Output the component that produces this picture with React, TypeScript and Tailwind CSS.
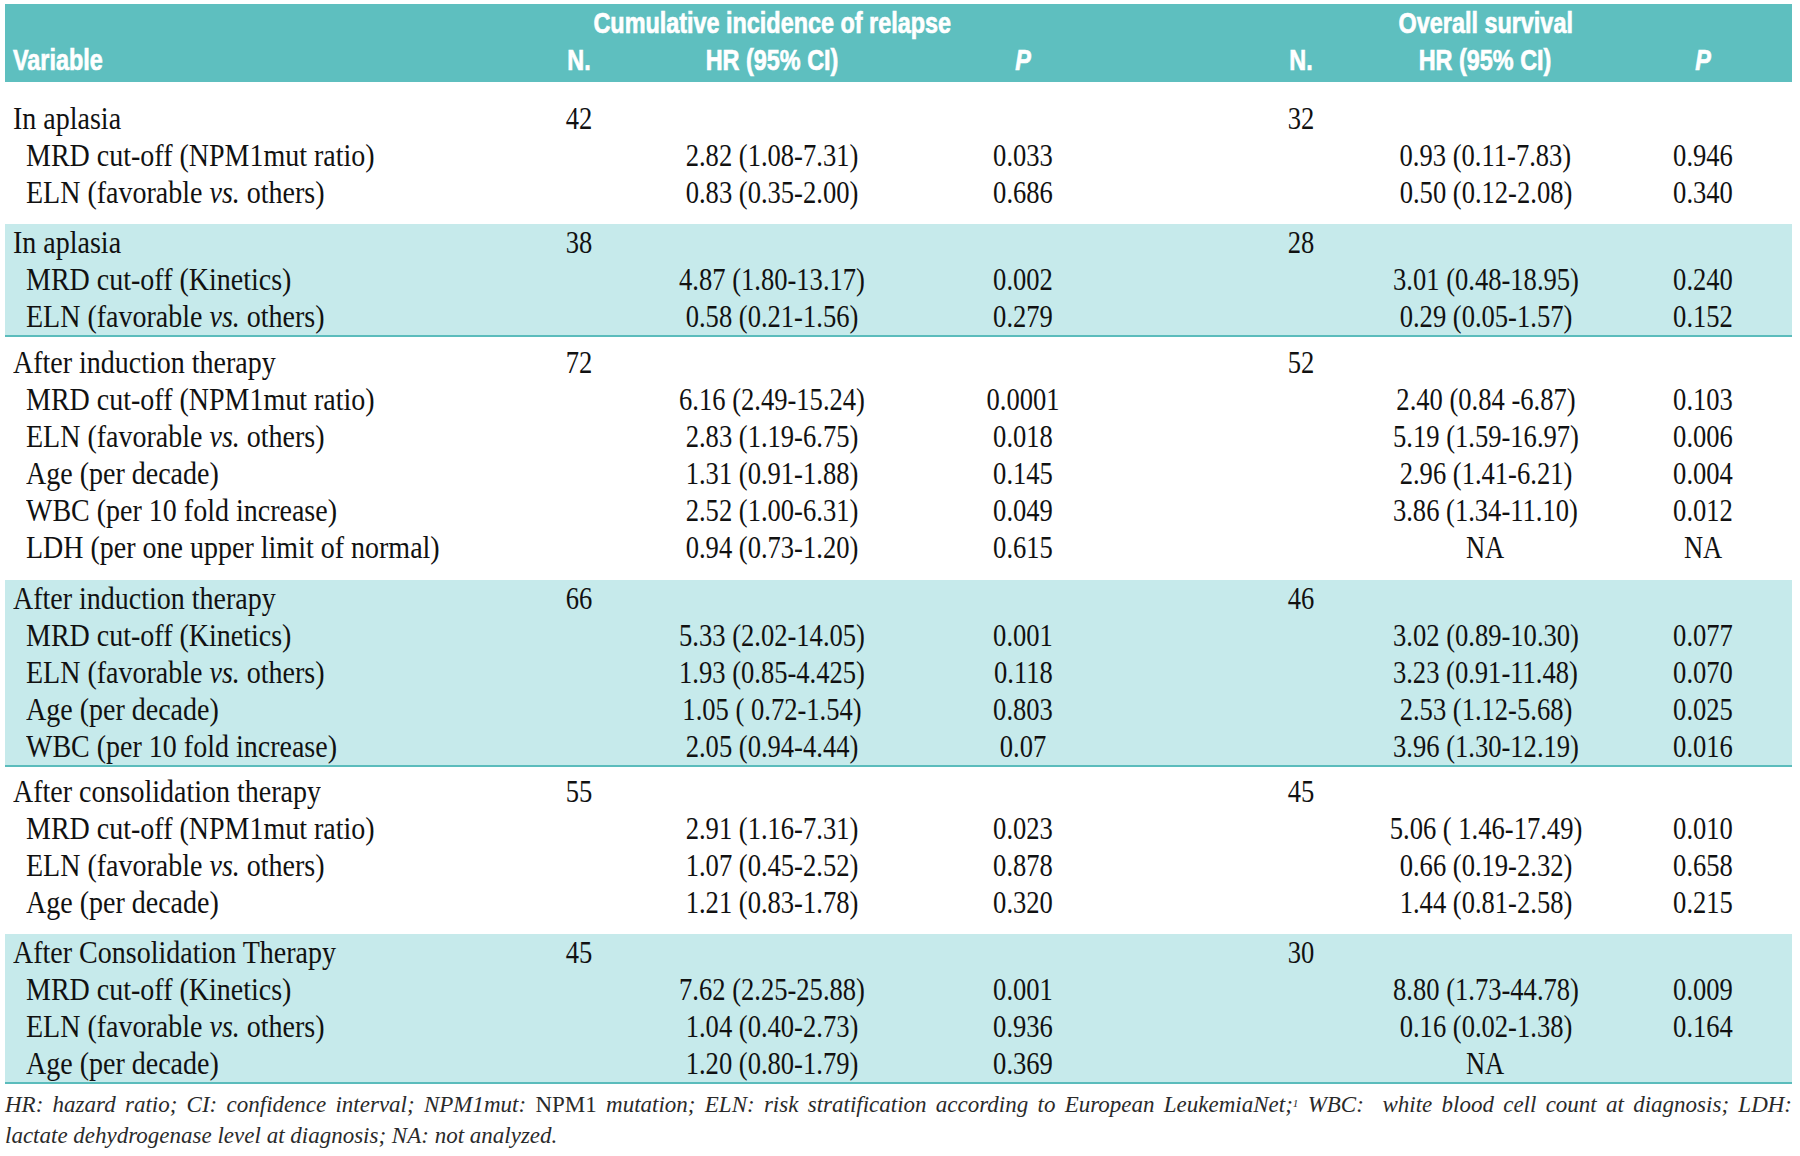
import React from "react";

type Row = {
  label: React.ReactNode;
  hr1: string;
  p1: string;
  hr2: string;
  p2: string;
};

type Group = {
  band: boolean;
  label: string;
  n1: string;
  n2: string;
  pad: string;
  rows: Row[];
};

const eln = (
  <>
    ELN (favorable <i>vs.</i> others)
  </>
);

const r = (
  label: React.ReactNode,
  hr1: string,
  p1: string,
  hr2: string,
  p2: string
): Row => ({ label, hr1, p1, hr2, p2 });

const groups: Group[] = [
  {
    band: false,
    label: "In aplasia",
    n1: "42",
    n2: "32",
    pad: "pt-[18px] pb-[13px]",
    rows: [
      r("MRD cut-off (NPM1mut ratio)", "2.82 (1.08-7.31)", "0.033", "0.93 (0.11-7.83)", "0.946"),
      r(eln, "0.83 (0.35-2.00)", "0.686", "0.50 (0.12-2.08)", "0.340"),
    ],
  },
  {
    band: true,
    label: "In aplasia",
    n1: "38",
    n2: "28",
    pad: "",
    rows: [
      r("MRD cut-off (Kinetics)", "4.87 (1.80-13.17)", "0.002", "3.01 (0.48-18.95)", "0.240"),
      r(eln, "0.58 (0.21-1.56)", "0.279", "0.29 (0.05-1.57)", "0.152"),
    ],
  },
  {
    band: false,
    label: "After induction therapy",
    n1: "72",
    n2: "52",
    pad: "pt-[7px] pb-[14px]",
    rows: [
      r("MRD cut-off (NPM1mut ratio)", "6.16 (2.49-15.24)", "0.0001", "2.40 (0.84 -6.87)", "0.103"),
      r(eln, "2.83 (1.19-6.75)", "0.018", "5.19 (1.59-16.97)", "0.006"),
      r("Age (per decade)", "1.31 (0.91-1.88)", "0.145", "2.96 (1.41-6.21)", "0.004"),
      r("WBC (per 10 fold increase)", "2.52 (1.00-6.31)", "0.049", "3.86 (1.34-11.10)", "0.012"),
      r("LDH (per one upper limit of normal)", "0.94 (0.73-1.20)", "0.615", "NA", "NA"),
    ],
  },
  {
    band: true,
    label: "After induction therapy",
    n1: "66",
    n2: "46",
    pad: "",
    rows: [
      r("MRD cut-off (Kinetics)", "5.33 (2.02-14.05)", "0.001", "3.02 (0.89-10.30)", "0.077"),
      r(eln, "1.93 (0.85-4.425)", "0.118", "3.23 (0.91-11.48)", "0.070"),
      r("Age (per decade)", "1.05 ( 0.72-1.54)", "0.803", "2.53 (1.12-5.68)", "0.025"),
      r("WBC (per 10 fold increase)", "2.05 (0.94-4.44)", "0.07", "3.96 (1.30-12.19)", "0.016"),
    ],
  },
  {
    band: false,
    label: "After consolidation therapy",
    n1: "55",
    n2: "45",
    pad: "pt-[6px] pb-[13px]",
    rows: [
      r("MRD cut-off (NPM1mut ratio)", "2.91 (1.16-7.31)", "0.023", "5.06 ( 1.46-17.49)", "0.010"),
      r(eln, "1.07 (0.45-2.52)", "0.878", "0.66 (0.19-2.32)", "0.658"),
      r("Age (per decade)", "1.21 (0.83-1.78)", "0.320", "1.44 (0.81-2.58)", "0.215"),
    ],
  },
  {
    band: true,
    label: "After Consolidation Therapy",
    n1: "45",
    n2: "30",
    pad: "",
    rows: [
      r("MRD cut-off (Kinetics)", "7.62 (2.25-25.88)", "0.001", "8.80 (1.73-44.78)", "0.009"),
      r(eln, "1.04 (0.40-2.73)", "0.936", "0.16 (0.02-1.38)", "0.164"),
      r("Age (per decade)", "1.20 (0.80-1.79)", "0.369", "NA", ""),
    ],
  },
];

const GRID = "grid grid-cols-[499px_150px_236px_266px_290px_159px_187px]";

const Label = ({ children, indent }: { children: React.ReactNode; indent?: boolean }) => (
  <div className={`flex h-[37px] items-center ${indent ? "pl-[21px]" : "pl-[8px]"}`}>
    <span className="inline-block origin-left scale-x-[0.875] whitespace-nowrap">
      {children}
    </span>
  </div>
);

const Num = ({ children, extra = "" }: { children?: React.ReactNode; extra?: string }) => (
  <div className={`flex h-[37px] items-center justify-center ${extra}`}>
    <span className="inline-block scale-x-[0.83] whitespace-nowrap">{children}</span>
  </div>
);

const Head = ({ children, extra = "" }: { children?: React.ReactNode; extra?: string }) => (
  <div className={`flex h-[37px] items-center justify-center ${extra}`}>
    <span className="inline-block scale-x-[0.78] whitespace-nowrap">{children}</span>
  </div>
);

const App = () => {
  return (
    <div className="min-h-screen w-full bg-white pt-[4px] pl-[5px]">
      <div className="w-[1787px]">
        <div className="bg-[#5ebfbf] pb-[4px] font-['Liberation_Sans',Arial,sans-serif] text-[30px] font-bold leading-[37px] text-white [-webkit-text-stroke:0.7px_white]">
          <div className={GRID}>
            <div />
            <div />
            <Head>Cumulative incidence of relapse</Head>
            <div />
            <div />
            <Head extra="pr-[80px]">Overall survival</Head>
            <div />
          </div>
          <div className={GRID}>
            <div className="flex h-[37px] items-center pl-[8px]">
              <span className="inline-block origin-left scale-x-[0.78]">Variable</span>
            </div>
            <Head>N.</Head>
            <Head>HR (95% CI)</Head>
            <Head>
              <i>P</i>
            </Head>
            <Head>N.</Head>
            <Head extra="pr-[80px]">HR (95% CI)</Head>
            <Head extra="pl-[9px]">
              <i>P</i>
            </Head>
          </div>
        </div>

        <div className="font-['Liberation_Serif','Times_New_Roman',serif] text-[32px] leading-[37px] text-[#111]">
          {groups.map((g, gi) => (
            <div
              key={gi}
              className={
                g.band
                  ? "border-b-2 border-[#5bbcbc] bg-[#c6eaeb]"
                  : `bg-white ${g.pad}`
              }
            >
              <div className={GRID}>
                <Label>{g.label}</Label>
                <Num>{g.n1}</Num>
                <Num />
                <Num />
                <Num>{g.n2}</Num>
                <Num extra="pr-[80px]" />
                <Num extra="pl-[9px]" />
              </div>
              {g.rows.map((row, ri) => (
                <div key={ri} className={GRID}>
                  <Label indent>{row.label}</Label>
                  <Num />
                  <Num>{row.hr1}</Num>
                  <Num>{row.p1}</Num>
                  <Num />
                  <Num extra="pr-[80px]">{row.hr2}</Num>
                  <Num extra="pl-[9px]">{row.p2}</Num>
                </div>
              ))}
            </div>
          ))}
        </div>

        <div className="pt-[5px] font-['Liberation_Serif','Times_New_Roman',serif] text-[23px] leading-[31px] text-[#2a2a2a]">
          <p className="text-justify whitespace-nowrap [text-align-last:justify]">
            <i>HR: hazard ratio; CI: confidence interval; NPM1mut:</i> NPM1{" "}
            <i>
              mutation; ELN: risk stratification according to European LeukemiaNet;
              <sup className="text-[11px]">1</sup> WBC: &nbsp;white blood cell count at diagnosis; LDH:
            </i>
          </p>
          <p>
            <i>lactate dehydrogenase level at diagnosis; NA: not analyzed.</i>
          </p>
        </div>
      </div>
    </div>
  );
};

export default App;
